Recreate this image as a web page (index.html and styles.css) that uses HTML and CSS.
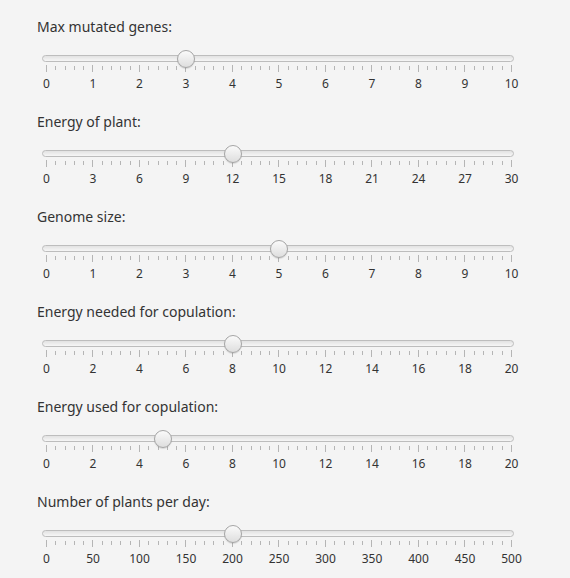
FILE: index.html
```html
<!DOCTYPE html>
<html>
<head>
	<title>Simulation settings</title>
	<link rel="stylesheet" href="styles.css">
</head>
<body>
	<div class="settings">
		<div class="setting">
			<div class="title">Max mutated genes:</div>
			<div class="slider">
				<div class="track"></div>
				<div class="thumb" style="left: 30%"></div>
			</div>
			<div class="ticks"></div>
			<div class="labels">
				<span>0</span><span>1</span><span>2</span><span>3</span><span>4</span><span>5</span>
				<span>6</span><span>7</span><span>8</span><span>9</span><span>10</span>
			</div>
		</div>
		<div class="setting">
			<div class="title">Energy of plant:</div>
			<div class="slider">
				<div class="track"></div>
				<div class="thumb" style="left: 40%"></div>
			</div>
			<div class="ticks"></div>
			<div class="labels">
				<span>0</span><span>3</span><span>6</span><span>9</span><span>12</span><span>15</span>
				<span>18</span><span>21</span><span>24</span><span>27</span><span>30</span>
			</div>
		</div>
		<div class="setting">
			<div class="title">Genome size:</div>
			<div class="slider">
				<div class="track"></div>
				<div class="thumb" style="left: 50%"></div>
			</div>
			<div class="ticks"></div>
			<div class="labels">
				<span>0</span><span>1</span><span>2</span><span>3</span><span>4</span><span>5</span>
				<span>6</span><span>7</span><span>8</span><span>9</span><span>10</span>
			</div>
		</div>
		<div class="setting">
			<div class="title">Energy needed for copulation:</div>
			<div class="slider">
				<div class="track"></div>
				<div class="thumb" style="left: 40%"></div>
			</div>
			<div class="ticks"></div>
			<div class="labels">
				<span>0</span><span>2</span><span>4</span><span>6</span><span>8</span><span>10</span>
				<span>12</span><span>14</span><span>16</span><span>18</span><span>20</span>
			</div>
		</div>
		<div class="setting">
			<div class="title">Energy used for copulation:</div>
			<div class="slider">
				<div class="track"></div>
				<div class="thumb" style="left: 25%"></div>
			</div>
			<div class="ticks"></div>
			<div class="labels">
				<span>0</span><span>2</span><span>4</span><span>6</span><span>8</span><span>10</span>
				<span>12</span><span>14</span><span>16</span><span>18</span><span>20</span>
			</div>
		</div>
		<div class="setting">
			<div class="title">Number of plants per day:</div>
			<div class="slider">
				<div class="track"></div>
				<div class="thumb" style="left: 40%"></div>
			</div>
			<div class="ticks"></div>
			<div class="labels">
				<span>0</span><span>50</span><span>100</span><span>150</span><span>200</span><span>250</span>
				<span>300</span><span>350</span><span>400</span><span>450</span><span>500</span>
			</div>
		</div>
	</div>
	<script src="script.js"></script>
</body>
</html>
```
FILE: styles.css
```css
body {
	margin: 0;
	background-color: #f4f4f4;
	font-family: "Noto Sans", "Open Sans", sans-serif;
	color: #333;
}
.settings {
	padding: 17px 0 0 37px;
	width: 477px;
}
.setting {
	height: 95px;
}
.title {
	font-size: 14px;
	line-height: 20px;
}
.slider {
	position: relative;
	margin: 18px 0 0 5px;
	height: 7px;
}
.track {
	height: 5px;
	border: 1px solid #bdbdbd;
	border-radius: 4px;
	background: linear-gradient(#e2e2e2, #f6f6f6);
}
.thumb {
	position: absolute;
	top: -5px;
	left: 0;
	width: 16px;
	height: 16px;
	transform: translateX(-50%);
	border: 1px solid #a5a5a5;
	border-radius: 50%;
	background: linear-gradient(#fafafa, #dedede);
	box-shadow: 0 1px 1px rgba(0, 0, 0, 0.12);
}
.ticks {
	display: flex;
	justify-content: space-between;
	align-items: flex-start;
	margin: 3px 0 0 9px;
	width: 466px;
	height: 7px;
}
.tick {
	width: 1px;
	height: 4px;
	margin-top: 1px;
	background-color: #b5b5b5;
}
.tick.major {
	height: 7px;
	margin-top: 0;
}
.labels {
	display: flex;
	justify-content: space-between;
	margin: 5px 0 0 9px;
	width: 466px;
	font-size: 12px;
	line-height: 14px;
}
.labels span {
	width: 1px;
	display: flex;
	justify-content: center;
	white-space: nowrap;
}
```
FILE: script.js
```js
// build the tick marks: 10 majors, 4 minors between each
document.querySelectorAll('.ticks').forEach(function (row) {
	for (let i = 0; i <= 50; i++) {
		let t = document.createElement('div');
		t.className = i % 5 === 0 ? 'tick major' : 'tick';
		row.appendChild(t);
	}
});

// place each thumb over the tick area (starts 4px in from the track)
document.querySelectorAll('.thumb').forEach(function (thumb) {
	let pct = parseFloat(thumb.style.left) / 100;
	thumb.style.left = (4.5 + pct * 465) + 'px';
});
```
